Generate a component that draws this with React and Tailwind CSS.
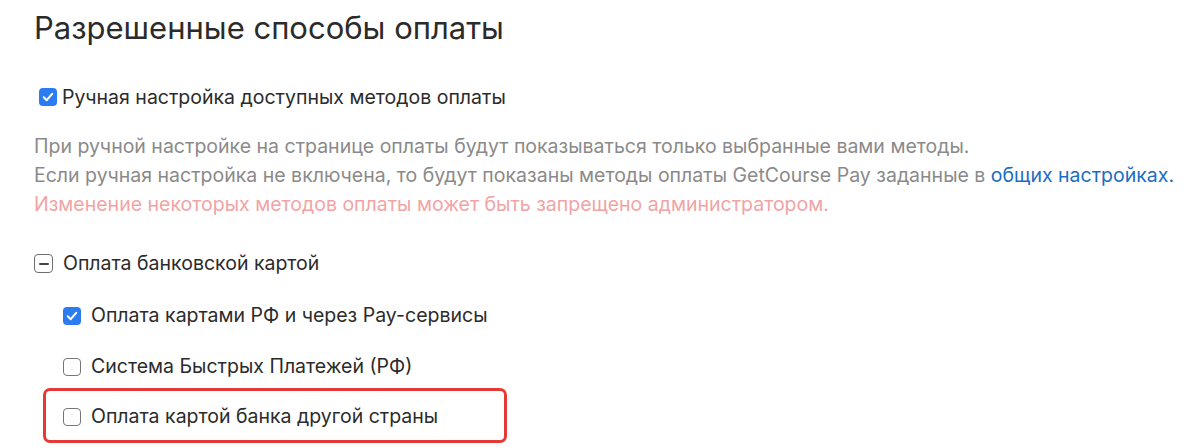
import React from 'react'

function Box({ state }) {
  if (state === 'checked') {
    return (
      <span className="flex h-[18px] w-[18px] shrink-0 items-center justify-center rounded-[4px] bg-[#2b7cf0]">
        <svg viewBox="0 0 16 16" className="h-[14px] w-[14px]" fill="none">
          <path d="M3.2 8.4 6.5 11.6 12.8 4.4" stroke="white" strokeWidth="2.4" strokeLinecap="round" strokeLinejoin="round" />
        </svg>
      </span>
    )
  }
  if (state === 'mixed') {
    return (
      <span className="flex h-[19px] w-[19px] shrink-0 items-center justify-center rounded-[4px] border border-[#6f6f6f] bg-white">
        <span className="h-[2px] w-[10px] rounded bg-[#444]" />
      </span>
    )
  }
  return <span className="h-[18px] w-[18px] shrink-0 rounded-[4px] border border-[#767676] bg-white" />
}

function Row({ state, children }) {
  return (
    <label className="flex items-center gap-[10px] text-[19.5px] text-[#2b2b2b]">
      <Box state={state} />
      <span>{children}</span>
    </label>
  )
}

export default function App() {
  const methods = [
    { id: 'rf', label: 'Оплата картами РФ и через Pay-сервисы', state: 'checked' },
    { id: 'sbp', label: 'Система Быстрых Платежей (РФ)', state: 'empty' },
  ]

  return (
    <div className="h-[448px] w-[1200px] overflow-hidden bg-white pl-[34px] pt-[9px]" style={{ fontFamily: 'Inter, "Noto Sans", sans-serif' }}>
      <h2 className="text-[31px] leading-[38px] font-normal text-[#2b2b2b]">Разрешенные способы оплаты</h2>

      <div className="mt-[37px] pl-[5px]">
        <label className="flex items-center gap-[5px] text-[19.5px] leading-[26px] text-[#2b2b2b]">
          <Box state="checked" />
          <span>Ручная настройка доступных методов оплаты</span>
        </label>
      </div>

      <div className="mt-[22px] text-[19.5px] leading-[29px] text-[#8a8a8a]">
        <p>При ручной настройке на странице оплаты будут показываться только выбранные вами методы.</p>
        <p>
          Если ручная настройка не включена, то будут показаны методы оплаты GetCourse Pay заданные в{' '}
          <a href="#" className="text-[#1c6cc2]">общих настройках.</a>
        </p>
        <p className="text-[#f2a4a4]">Изменение некоторых методов оплаты может быть запрещено администратором.</p>
      </div>

      <div className="mt-[30px]">
        <Row state="mixed">Оплата банковской картой</Row>

        <div className="ml-[9px] mt-[12px] flex flex-col">
          {methods.map((m) => (
            <div key={m.id} className="flex h-[51px] items-center pl-[20px]">
              <Row state={m.state}>{m.label}</Row>
            </div>
          ))}
          <div className="-mt-[4px] flex h-[55px] w-[464px] shrink-0 items-center rounded-[7px] border-[3px] border-[#e53935] pl-[17px] pt-[2px]">
            <Row state="empty">Оплата картой банка другой страны</Row>
          </div>
        </div>
      </div>
    </div>
  )
}
